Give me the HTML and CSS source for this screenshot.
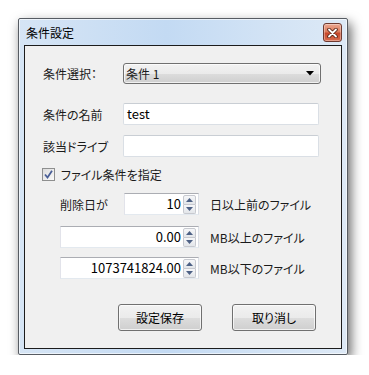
FILE: index.html
```html
<!DOCTYPE html>
<html lang="ja">
<head>
    <meta charset="UTF-8">
    <title>条件設定</title>
    <link rel="stylesheet" href="styles.css">
</head>
<body>
    <div class="window">
        <div class="titlebar">
            <span class="title">条件設定</span>
            <div class="close-btn">
                <svg width="11" height="10" viewBox="0 0 11 10">
                    <path d="M2 1.5 L9 8.5 M9 1.5 L2 8.5" stroke="#5a2416" stroke-width="3.6" stroke-linecap="round"/>
                    <path d="M2 1.5 L9 8.5 M9 1.5 L2 8.5" stroke="#fff" stroke-width="1.8" stroke-linecap="round"/>
                </svg>
            </div>
        </div>
        <div class="client">
            <div class="row row-select">
                <span class="label">条件選択：</span>
                <div class="combo">
                    <span>条件 1</span>
                    <svg width="8" height="5" viewBox="0 0 8 5"><path d="M0 0 H8 L4 4.5 Z" fill="#000"/></svg>
                </div>
            </div>
            <div class="row row-name">
                <span class="label">条件の名前</span>
                <div class="textbox">test</div>
            </div>
            <div class="row row-drive">
                <span class="label">該当ドライブ</span>
                <div class="textbox"></div>
            </div>
            <div class="row row-check">
                <span class="checkbox">
                    <svg width="9" height="9" viewBox="0 0 9 9"><path d="M1 4.5 L3.5 7.5 L8 0.8" fill="none" stroke="#4a5f97" stroke-width="1.8"/></svg>
                </span>
                <span>ファイル条件を指定</span>
            </div>
            <div class="row row-spin1 indent">
                <span class="label-short">削除日が</span>
                <div class="spin spin-short">
                    <span class="val">10</span>
                    <div class="arrows">
                        <div class="arrow up"><svg width="7" height="4" viewBox="0 0 7 4"><path d="M3.5 0 L7 4 H0 Z" fill="#4d6185"/></svg></div>
                        <div class="arrow down"><svg width="7" height="4" viewBox="0 0 7 4"><path d="M0 0 H7 L3.5 4 Z" fill="#4d6185"/></svg></div>
                    </div>
                </div>
                <span class="after">日以上前のファイル</span>
            </div>
            <div class="row row-spin2 indent">
                <div class="spin spin-long">
                    <span class="val">0.00</span>
                    <div class="arrows">
                        <div class="arrow up"><svg width="7" height="4" viewBox="0 0 7 4"><path d="M3.5 0 L7 4 H0 Z" fill="#4d6185"/></svg></div>
                        <div class="arrow down"><svg width="7" height="4" viewBox="0 0 7 4"><path d="M0 0 H7 L3.5 4 Z" fill="#4d6185"/></svg></div>
                    </div>
                </div>
                <span class="after">MB以上のファイル</span>
            </div>
            <div class="row row-spin3 indent">
                <div class="spin spin-long">
                    <span class="val">1073741824.00</span>
                    <div class="arrows">
                        <div class="arrow up"><svg width="7" height="4" viewBox="0 0 7 4"><path d="M3.5 0 L7 4 H0 Z" fill="#4d6185"/></svg></div>
                        <div class="arrow down"><svg width="7" height="4" viewBox="0 0 7 4"><path d="M0 0 H7 L3.5 4 Z" fill="#4d6185"/></svg></div>
                    </div>
                </div>
                <span class="after">MB以下のファイル</span>
            </div>
            <div class="buttons">
                <div class="button">設定保存</div>
                <div class="button">取り消し</div>
            </div>
        </div>
    </div>
</body>
</html>
```

FILE: styles.css
```css
body {
    margin: 0;
    padding: 18px 0 0 18px;
    background: #fff;
    font-family: "Noto Sans CJK JP", "Liberation Sans", sans-serif;
    font-size: 12px;
    font-feature-settings: "palt";
    color: #1a1a1a;
}
.window {
    width: 318px;
    height: 330px;
    border: 1px solid #575c63;
    border-radius: 2px;
    padding: 0 5px 5px 5px;
    background: linear-gradient(90deg, #d6e5f5 0%, #c3daf3 45%, #d2e3f5 75%, #dde9f6 100%);
    box-shadow: 3px 5px 12px rgba(0, 0, 0, 0.6), inset 0 0 0 1px rgba(255, 255, 255, 0.6);
    display: flex;
    flex-direction: column;
}
.titlebar {
    height: 26px;
    display: flex;
    align-items: flex-start;
    justify-content: space-between;
}
.title {
    margin: 5px 0 0 2px;
    font-size: 12px;
    color: #000;
}
.close-btn {
    margin-top: 4px;
    width: 17px;
    height: 17px;
    border: 1px solid #6e3a30;
    border-radius: 3px;
    background: linear-gradient(#eba892 0%, #dc7b5c 45%, #c8492c 55%, #d86c4e 100%);
    display: flex;
    align-items: center;
    justify-content: center;
    box-shadow: inset 0 0 0 1px rgba(255, 255, 255, 0.35);
}
.client {
    flex: 1;
    border: 1px solid #1c1c1c;
    background: #f0f0f0;
    padding-left: 18px;
    display: flex;
    flex-direction: column;
}
.row {
    display: flex;
    align-items: center;
}
.label {
    width: 80px;
}
.row-select {
    margin-top: 17px;
    height: 21px;
}
.combo {
    width: 188px;
    height: 19px;
    border: 1px solid #707070;
    border-radius: 3px;
    background: linear-gradient(#f2f2f2 0%, #ebebeb 50%, #dddddd 51%, #cfcfcf 100%);
    display: flex;
    align-items: center;
    justify-content: space-between;
    padding: 0 6px 0 2px;
    box-shadow: inset 0 0 0 1px rgba(255, 255, 255, 0.7);
}
.textbox {
    width: 191px;
    height: 20px;
    border: 1px solid #dadfe5;
    border-top-color: #c9ced4;
    border-radius: 2px;
    background: #fff;
    padding-left: 3px;
    line-height: 20px;
    font-size: 13px;
    color: #000;
}
.row-name {
    margin-top: 19px;
    height: 22px;
}
.row-drive {
    margin-top: 10px;
    height: 22px;
}
.row-check {
    margin-top: 11px;
    height: 13px;
}
.checkbox {
    width: 11px;
    height: 11px;
    border: 1px solid #8e8f8f;
    background: linear-gradient(135deg, #dcdcdc, #fafafa);
    margin: 0 6px 0 -1px;
    display: flex;
    align-items: center;
    justify-content: center;
}
.indent {
    padding-left: 17px;
}
.label-short {
    width: 64px;
}
.row-spin1 {
    margin-top: 12px;
    height: 22px;
}
.row-spin2 {
    margin-top: 11px;
    height: 22px;
}
.row-spin3 {
    margin-top: 9px;
    height: 22px;
}
.spin {
    height: 20px;
    border: 1px solid #abadb3;
    border-color: #abadb3 #dbdfe6 #e3e9ef #e2e3ea;
    background: #fff;
    display: flex;
    align-items: stretch;
}
.spin-short {
    width: 73px;
}
.spin-long {
    width: 137px;
}
.spin .val {
    flex: 1;
    text-align: right;
    padding-right: 1px;
    line-height: 20px;
    font-size: 13px;
    color: #000;
}
.arrows {
    width: 13px;
    margin: 0 2px 0 1px;
    display: flex;
    flex-direction: column;
    justify-content: center;
}
.arrow {
    height: 8px;
    border: 1px solid #c7c9cf;
    background: linear-gradient(#f6f7f9, #e3e6ea);
    display: flex;
    align-items: center;
    justify-content: center;
}
.arrow.up {
    border-radius: 2px 2px 0 0;
}
.arrow.down {
    border-radius: 0 0 2px 2px;
    border-top: none;
}
.after {
    margin-left: 11px;
}
.buttons {
    margin-top: 25px;
    display: flex;
    gap: 30px;
    padding-left: 75px;
}
.button {
    width: 82px;
    height: 25px;
    border: 1px solid #707070;
    border-radius: 3px;
    background: linear-gradient(#f2f2f2 0%, #ebebeb 50%, #dddddd 51%, #cfcfcf 100%);
    box-shadow: inset 0 0 0 1px rgba(255, 255, 255, 0.7);
    display: flex;
    align-items: center;
    justify-content: center;
    color: #000;
}
```
